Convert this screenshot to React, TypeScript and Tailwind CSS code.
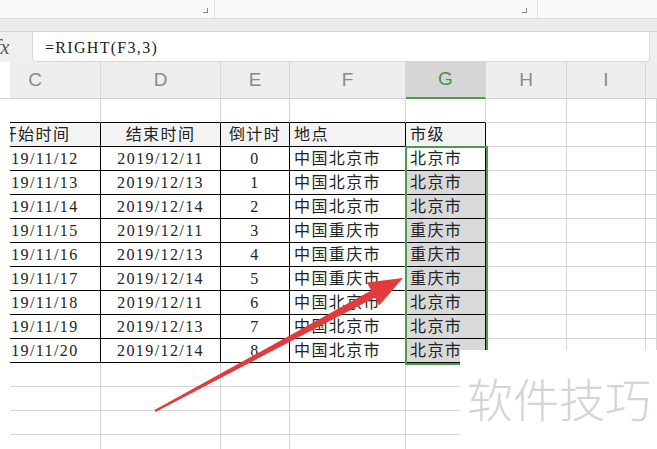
import React from "react";

const cols = ["C", "D", "E", "F", "G", "H", "I", ""];

const rows = [
  ["2019/11/12", "2019/12/11", "0", "中国北京市", "北京市"],
  ["2019/11/13", "2019/12/13", "1", "中国北京市", "北京市"],
  ["2019/11/14", "2019/12/14", "2", "中国北京市", "北京市"],
  ["2019/11/15", "2019/12/11", "3", "中国重庆市", "重庆市"],
  ["2019/11/16", "2019/12/13", "4", "中国重庆市", "重庆市"],
  ["2019/11/17", "2019/12/14", "5", "中国重庆市", "重庆市"],
  ["2019/11/18", "2019/12/11", "6", "中国北京市", "北京市"],
  ["2019/11/19", "2019/12/13", "7", "中国北京市", "北京市"],
  ["2019/11/20", "2019/12/14", "8", "中国北京市", "北京市"],
];

const header = ["开始时间", "结束时间", "倒计时", "地点", "市级"];

const cellFont = "font-['Liberation_Serif','Noto_Sans_CJK_SC',serif] text-[16px] tracking-[1.4px] text-[#222]";

function Cell({ r, c, text }: { r: number; c: number; text?: string }) {
  // r: 0 = empty row, 1 = header row, 2..10 = data, 11+ = empty
  const inTable = r >= 1 && r <= 10 && c <= 4;
  const bottomBlack = inTable || (r === 0 && c <= 4);
  const rightBlack = inTable;
  const selected = c === 4 && r >= 3 && r <= 10;
  const headerBg = r === 1 && c <= 4;

  const border = [
    "border-b border-r",
    bottomBlack ? "border-b-black" : "border-b-[#d6d6d6]",
    rightBlack ? "border-r-black" : "border-r-[#d6d6d6]",
  ].join(" ");

  const bg = selected ? "bg-[#d9d9d9]" : headerBg ? "bg-[#f3f3f3]" : "bg-white";

  let align = "justify-center";
  if (c === 3 || c === 4) align = "justify-start pl-[4px]";

  if (c === 0) {
    return (
      <div className={`h-[24px] overflow-hidden ${border} ${bg}`}>
        {text && (
          <div className={`-ml-[40px] w-[131px] h-full pt-[1px] flex items-center justify-center ${cellFont}`}>
            {text}
          </div>
        )}
      </div>
    );
  }

  return (
    <div className={`h-[24px] pt-[1px] flex items-center whitespace-nowrap ${align} ${border} ${bg} ${cellFont}`}>
      {text}
    </div>
  );
}

export default function App() {
  const allRows: (string[] | null)[] = [null, header, ...rows, null, null, null, null];

  return (
    <div className="relative w-[657px] h-[449px] overflow-hidden bg-white font-['Liberation_Sans',sans-serif]">
      {/* top panels */}
      <div className="h-[18px] flex bg-[#f9f9f9]">
        <div className="relative w-[215px] border-r border-[#e2e2e2]">
          <div className="absolute left-[203px] top-[8px] w-[5px] h-[5px] border-r border-b border-[#8a8a8a]" />
        </div>
        <div className="relative w-[323px] border-r border-[#e2e2e2]">
          <div className="absolute left-[307px] top-[8px] w-[5px] h-[5px] border-r border-b border-[#8a8a8a]" />
        </div>
        <div className="flex-1" />
      </div>

      {/* formula bar */}
      <div className="h-[44px] bg-[#efefef] border-t border-[#dcdcdc] flex flex-col">
        <div className="h-[14px] bg-[#ebebeb] border-b border-[#d6d6d6]" />
        <div className="flex-1 flex items-stretch">
          <div className="w-[32px] flex items-center overflow-hidden">
            <span className="-ml-[5px] italic font-['Liberation_Serif',serif] text-[20px] text-[#555]">fx</span>
          </div>
          <div className="w-[618px] bg-white border border-[#d8d8d8] border-t-0 rounded-b-[4px] flex items-center pl-[12px] pt-[2px]">
            <span className="font-['Liberation_Serif',serif] text-[16px] tracking-[1.3px] text-[#222]">=RIGHT(F3,3)</span>
          </div>
        </div>
      </div>

      {/* grid */}
      <div className="grid grid-cols-[10px_91px_120px_69px_116px_80px_81px_79px_1fr]">
        {/* column headers */}
        <div className="h-[37px] bg-white border-b border-[#cfcfcf]" />
        {cols.map((c, i) => (
          <div
            key={c + i}
            className={`h-[37px] flex items-center overflow-hidden text-[19px] ${
              i === 4
                ? "bg-[#d6d6d6] text-[#4a8f4a] border-b-2 border-b-[#4f9a4f]"
                : "bg-[#eeeeee] text-[#8a8a8a] border-b border-b-[#cfcfcf]"
            } ${i < 7 ? "border-r border-r-[#d8d8d8]" : ""}`}
          >
            <div className={`${i === 0 ? "-ml-[40px] w-[131px]" : "w-full"} text-center`}>{c}</div>
          </div>
        ))}

        {allRows.map((row, r) => (
          <React.Fragment key={r}>
            <div className="h-[24px] bg-white" />
            {cols.map((_, c) => (
              <Cell key={c} r={r} c={c} text={row ? row[c] : undefined} />
            ))}
          </React.Fragment>
        ))}
      </div>

      {/* selection frame G3:G11 */}
      <div className="absolute left-[405px] top-[146px] w-[83px] h-[219px] border-2 border-[#4f9a4f]" />

      {/* red arrow */}
      <svg className="absolute left-0 top-0 pointer-events-none" width="657" height="449" viewBox="0 0 657 449">
        <polygon
          points="155.5,411.9 374.9,297.5 379.1,305.5 403,278 366.9,282.5 371.1,290.5 154.5,410.1"
          fill="#e23b3b"
        />
      </svg>

      {/* watermark */}
      <div className="absolute left-[460px] top-[350px] right-0 bottom-0 bg-white">
        <div className="mt-[24px] ml-[7px] font-['Noto_Sans_CJK_SC',sans-serif] font-light text-[46px] leading-none text-[#d4d4d4]">
          软件技巧
        </div>
      </div>
    </div>
  );
}
